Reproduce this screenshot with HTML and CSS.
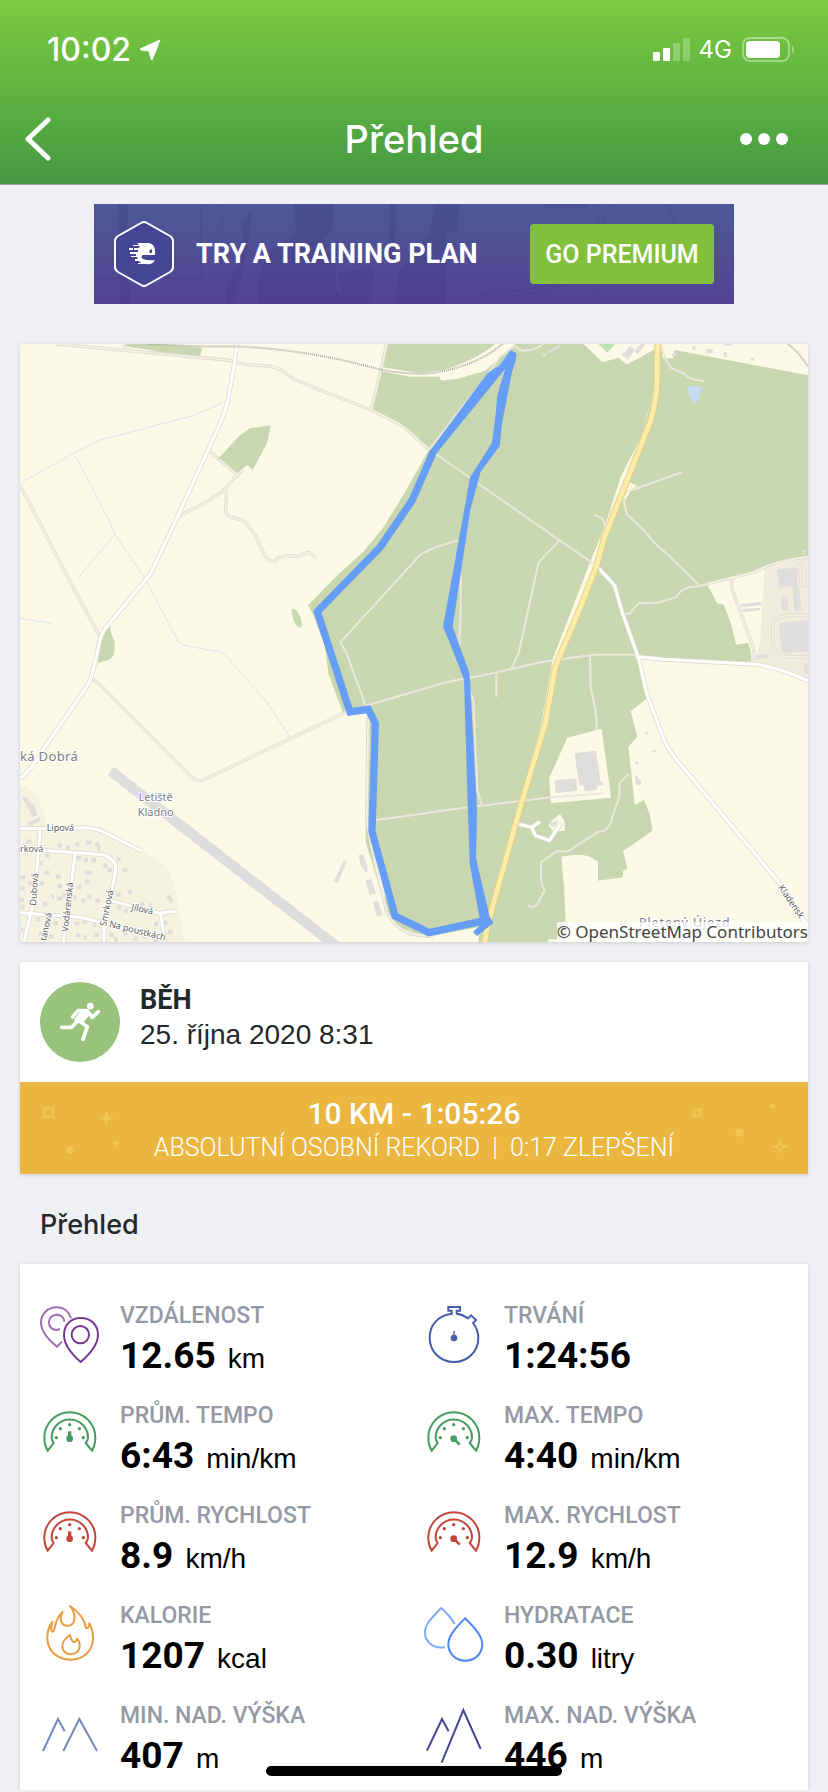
FILE: index.html
```html
<!DOCTYPE html>
<html lang="cs">

<head>
  <meta charset="utf-8">
  <meta name="viewport" content="width=device-width, initial-scale=1">
  <title>Přehled</title>
  <link rel="stylesheet" href="styles.css">
</head>

<body>
  <!-- shared icons -->
  <svg class="defs" width="0" height="0" aria-hidden="true">
    <symbol id="gauge" viewBox="120 432 180 180">
      <path d="M143 572C135 558 133 545 133 533A76 76 0 0 1 286 533C286 545 284 558 276 572L257 549Q264 541 264 533A54 54 0 0 0 155 533Q155 541 161 549Z" fill="none" stroke="currentColor" stroke-width="6" />
      <g fill="currentColor">
        <circle cx="169" cy="533" r="5" />
        <circle cx="181" cy="506" r="5" />
        <circle cx="209" cy="494" r="5" />
        <circle cx="238" cy="506" r="5" />
        <circle cx="250" cy="533" r="5" />
        <circle cx="209" cy="536" r="10" />
      </g>
    </symbol>
  </svg>

  <header class="header">
    <div class="status">
      <span class="time">10:02</span>
      <svg class="location" width="22" height="22" viewBox="0 0 22 22"><path d="M21 1L1 10L2 11L10 12L12 20L13 21Z" fill="#fff" stroke="#fff" stroke-linejoin="round" /></svg>
      <svg class="signal" width="38" height="24" viewBox="0 0 38 24" fill="#fff">
        <rect x="0" y="14" width="7" height="9" rx="1" />
        <rect x="10" y="10" width="7" height="13" rx="1" />
        <rect x="20" y="5" width="7" height="18" rx="1" opacity=".25" />
        <rect x="30" y="0" width="7" height="23" rx="1" opacity=".25" />
      </svg>
      <span class="network">4G</span>
      <svg width="54" height="26" viewBox="0 0 54 26">
        <rect x="1" y="1" width="46" height="23" rx="7" fill="none" stroke="#fff" stroke-width="2" opacity=".4" />
        <rect x="4" y="4" width="34" height="17" rx="4" fill="#fff" />
        <path d="M50 8Q54 12 50 17Z" fill="#fff" opacity=".4" />
      </svg>
    </div>
    <nav class="nav">
      <button class="nav-button" aria-label="Zpět">
        <svg width="28" height="44" viewBox="0 0 28 44"><path d="M24 3L4 22L24 41" fill="none" stroke="#fff" stroke-width="5" stroke-linecap="round" stroke-linejoin="round" /></svg>
      </button>
      <h1 class="title">Přehled</h1>
      <button class="nav-button" aria-label="Více">
        <svg width="48" height="12" viewBox="0 0 48 12" fill="#fff"><circle cx="6" cy="6" r="6" /><circle cx="24" cy="6" r="6" /><circle cx="42" cy="6" r="6" /></svg>
      </button>
    </nav>
  </header>

  <main class="content">
    <!-- premium banner -->
    <section class="banner">
      <svg class="banner-photo" viewBox="0 0 640 100" preserveAspectRatio="none" aria-hidden="true">
        <g fill="#393078" opacity=".2">
          <path d="M200 0H240L238 26L230 35L233 45L242 60V86L255 100H164C160 74 171 60 174 46L194 39L202 24Z" />
          <path d="M340 0H366L363 25L353 30L352 100H301L305 66L325 46L336 28Z" />
          <path d="M148 20L158 4L154 44L140 100H132C130 74 148 60 150 46Z" />
          <path d="M244 68L280 64L277 100H249ZM24 0H34L36 100H26ZM296 0H302L300 60H294ZM450 0H494L492 4H452Z" />
        </g>
        <path d="M107 0V78M128 0V64M0 74H110M380 92L560 68M518 0L480 80L410 94M504 0V100M575 0L590 60L640 52" fill="none" stroke="#33306f" opacity=".2" />
      </svg>
      <svg class="banner-logo" width="60" height="68" viewBox="0 0 60 68" aria-hidden="true">
        <path d="M27 3Q30 1 33 3L56 16Q59 18 59 21V47Q59 50 56 52L33 65Q30 67 27 65L4 52Q1 50 1 47V21Q1 18 4 16Z" fill="#444595" stroke="#fff" stroke-width="2" />
        <path d="M23 23H35Q42 24 41 35H29Q26 37 29 39Q34 41 41 40Q39 45 32 44H24V43H27L25 41H21V39H24L23 37H17V36H22V34H16V32H24V30H20V28H25L26 26H19V25H25Z" fill="#fff" />
        <path d="M15 28H19V30H15Z" fill="#fff" />
        <path d="M38 29Q34 30 36 33H38Z" fill="#444595" />
      </svg>
      <strong class="banner-text">TRY A TRAINING PLAN</strong>
      <button class="premium">GO PREMIUM</button>
    </section>

    <!-- map with the route -->
    <section class="map">
      <svg class="map-canvas" viewBox="60 42 2364 1794" role="img" aria-label="Mapa trasy">
        <defs>
          <g id="tracks">
            <path d="M170 42L375 61L680 90L740 103L810 109Q835 113 850 125L880 146L940 172L1114 240L1175 270Q1225 296 1260 335L1286 357" />
            <path d="M374 42V60M1160 42L1144 115L1114 240" />
            <path d="M60 465L200 735L298 918" />
            <path d="M624 361L712 435L728 420M712 435L670 482L625 512L538 558M670 482Q680 484 679 495L677 545Q680 558 695 562L725 570Q733 572 738 580L765 615L795 677Q810 696 822 695L834 684L860 677L892 680L922 667Q936 670 946 685" />
            <path d="M272 1048Q285 1050 300 1064L575 1342Q590 1356 610 1350L1000 1165L1050 1140" />
            <path d="M1105 1138L1100 1470L1125 1600L1160 1745Q1180 1790 1230 1812L1300 1820M1128 1590L1155 1700" />
            <path d="M2424 681Q2330 690 2264 726L2120 762M2205 742Q2192 750 2194 770L2255 940L2262 965V1002M2424 855H2375Q2318 858 2318 890V940Q2322 978 2370 980H2424M2395 765Q2394 700 2405 698Q2414 700 2412 765Z" />
          </g>
          <g id="forest-tracks">
            <path d="M1286 357L1680 632L1780 700" />
            <path d="M1678 632L1616 697L1556 970L1532 1019" />
            <path d="M1374 631Q1290 655 1260 675L1021 937L1040 970L1096 1125" />
            <path d="M1096 1128L1320 1062Q1360 1050 1440 1038L1630 995L1780 974H1914" />
            <path d="M1382 730V860L1374 1000L1420 1110L1432 1380L1446 1428M1489 1028V1102" />
            <path d="M1770 975L1772 1070Q1790 1150 1791 1200" />
            <path d="M1128 1470L1224 1457L1340 1440L1640 1403L1812 1390" />
            <path d="M2047 426L1880 486L1868 500L1880 552L1930 600L1960 635L2010 680L2100 768L2065 772L2042 784L2028 802L1975 818L1915 820L1890 850L1870 853M2100 768L2125 761" />
            <path d="M1782 555L1808 566L1816 592" />
            <path d="M1540 45Q1558 58 1566 62Q1600 64 1630 42M1540 50L1500 80L1450 150L1286 360" />
            <path d="M1984 42Q1992 90 2014 114L2050 130Q2070 150 2112 153" />
            <path d="M1886 1331L1858 1360V1400L1840 1450L1832 1480L1815 1502L1795 1505L1704 1564H1670L1625 1595Q1618 1660 1634 1682L1610 1724Q1595 1737 1583 1726" />
          </g>
          <g id="roads">
            <path d="M711 42L704 95L684 210Q677 235 668 262L624 361L535 555L455 725Q450 735 438 748L330 878Q305 905 300 930L288 985L272 1048Q265 1066 250 1085L130 1258Q90 1325 60 1345" />
            <path d="M1792 710L1843 765L1866 845L1916 985L1940 1090L1992 1230Q2010 1270 2060 1325L2335 1655L2424 1790" />
            <path d="M1908 980L1990 988L2264 1003Q2330 1010 2424 1053" />
            <path d="M60 1496L260 1493Q290 1495 320 1510L425 1563M60 1560L145 1562L310 1574Q355 1590 345 1630L333 1700L312 1785V1836M120 1500L104 1700L92 1750L72 1836M225 1572L210 1700L190 1836M60 1748L240 1762L310 1778L420 1810M333 1712L480 1750L530 1743M482 1752L494 1836" />
            <path d="M1555 1482L1595 1492L1606 1516L1648 1532L1666 1505L1682 1480M1595 1492L1620 1475" />
          </g>
        </defs>

        <rect x="60" y="42" width="2364" height="1794" fill="#fcfae6" />

        <!-- forests -->
        <g fill="#c8d7af">
          <path d="M1160 42H1751L1807 97L1856 83L1880 104L1970 55L1981 42L1989 85H2019L2024 60L2424 136V678L2330 695L2264 725L2119 760L2152 820L2172 825L2194 885L2209 945L2244 938L2254 970V1002L1914 980L1942 1105L1892 1144L1912 1220L1885 1250L1904 1425L1932 1410L1950 1455L1957 1502L1869 1564L1883 1615L1869 1623V1642L1794 1652V1595L1769 1580Q1740 1568 1684 1580L1692 1670L1699 1826L1647 1828L1642 1836H1435L1440 1790L1284 1820L1190 1790L1160 1740L1097 1535V1430L1100 1145L1028 1146L985 1030L975 950L940 855L924 826L1010 738L1090 665L1148 595L1210 495L1286 360L1230 302L1175 268L1114 238Z" />
          <path d="M378 42H480L606 53L601 78L482 68Q450 58 380 50Z" />
          <path d="M657 383L715 320L750 295L813 286L801 340L758 419L741 405L712 430Z" />
          <path d="M332 885V905L344 935L343 965Q340 990 315 992L292 1000L308 915Z" />
          <path d="M874 840Q882 830 892 846Q905 865 906 884Q903 895 896 892Q878 880 874 840Z" />
        </g>

        <!-- clearings -->
        <g fill="#fcfae6">
          <path d="M1148 112L1260 130L1330 120Q1420 95 1486 42H1545L1456 122L1374 146L1324 152L1318 140L1230 140L1145 124Z" />
          <path d="M1969 160L1938 265L1924 320L1862 440L1814 590L1769 700L1657 990L1649 1040L1624 1180L1569 1390L1552 1480L1660 1040L1780 730L1890 440Z" />
          <path d="M1702 1223L1805 1196L1833 1403L1653 1420L1647 1345Z" />
          <path d="M1655 1472L1680 1452L1694 1475V1502L1660 1505L1646 1486Z" />
          <path d="M1888 456L1912 468L1895 478L1876 510L1862 490Z" />
        </g>
        <path d="M2294 718L2424 680V1050Q2380 1030 2264 1000L2280 940Z" fill="#eeeddb" />
        <path d="M60 1370L75 1368Q115 1390 120 1420L145 1490H260L320 1510L440 1572L496 1604Q525 1650 535 1730L555 1836H60Z" fill="#f5f3e0" />
        <path d="M1795 42H1846L1822 68Z" fill="#bee2b5" />
        <path d="M2064 172Q2084 162 2104 172Q2104 210 2084 219Q2066 208 2064 172Z" fill="#c6dbef" />
        <path d="M341 1310L1018 1836H967L324 1336Z" fill="#dedddd" />

        <!-- streams -->
        <g fill="none" stroke="#d9e6ef" stroke-width="3">
          <path d="M60 460L215 373L300 330L580 257L650 226L665 216H678M215 373L232 388L328 573L345 613L435 745M345 613L237 740M440 755L535 935L550 946L655 965L672 971L800 1115L870 1222M60 864L155 881" />
        </g>

        <!-- buildings -->
        <g fill="#e0dedd">
          <path d="M1641 67L1676 44L1684 50L1645 70ZM1624 70L1636 68L1640 76L1630 82ZM1866 76L1890 48L1904 60L1884 90ZM1904 62L1922 42H1936L1914 72Z" />
          <path d="M2078 47H2086V60H2076ZM2119 57H2138V70H2118ZM2172 66H2180V80H2170ZM2252 83H2262V92H2252ZM2016 70H2029V77H2016ZM2170 42H2195V47H2170Z" />
          <path d="M2332 718L2392 713L2404 842L2384 845L2377 770L2338 773ZM2343 801L2362 799L2366 842L2346 844ZM2337 880L2424 870V965L2346 968ZM2222 822L2284 816V825L2222 832ZM2225 838L2280 833V841L2230 846ZM2268 976L2306 972V984L2266 986ZM2412 1000H2424V1030H2412ZM2405 662L2415 660V675L2408 676Z" />
          <path d="M1723 1270L1789 1262L1801 1356L1809 1357V1365L1792 1368L1790 1380L1754 1384L1752 1366L1738 1367ZM1664 1351L1729 1344L1732 1382L1666 1390ZM1648 1480L1674 1470L1670 1484L1656 1492Z" />
          <path d="M1905 1337H1913V1346Q1930 1353 1922 1363Q1910 1370 1906 1355ZM1905 1295H1916V1302H1905ZM1935 1206H1944V1213H1935ZM1958 1260H1968V1267H1958Z" />
          <path d="M66 1403L80 1400L92 1422L100 1420L114 1455L98 1462L82 1430ZM82 1478L120 1462L122 1472L90 1488Z" />
          <path d="M1032 1590L1041 1595L1012 1660L1001 1655ZM1076 1576L1088 1572L1096 1590L1104 1622L1096 1626L1082 1605ZM1097 1650L1114 1648L1128 1690L1108 1694ZM1118 1716L1134 1712L1148 1755L1132 1760Z" />
        </g>
        <path d="M68 1545h14M80 1535h14M172 1547h14M198 1552h12M226 1543h12M258 1538h16M286 1543h12M292 1555h10M230 1584h14M252 1590h12M274 1590h14M134 1577h14M350 1588h12M368 1620h14M118 1600h10M134 1628h14M168 1640h14M255 1628h20M310 1606h12M322 1620h14M62 1642h14M84 1660h14M62 1675h12M120 1660h12M172 1668h14M186 1695h14M232 1672h12M255 1655h14M60 1710h12M128 1722h14M154 1700h8M172 1706h14M220 1702h10M245 1712h12M262 1700h12M286 1712h14M348 1694h14M384 1686h12M350 1732h14M372 1742h12M420 1722h12M446 1726h10M500 1702h14M508 1712h10M62 1730h12M108 1768h12M138 1772h14M160 1780h14M224 1780h14M248 1776h14M278 1785h12M228 1815h14M250 1822h10M282 1815h14M328 1815h14M342 1828h12M116 1810h14M146 1820h14M62 1800h8M370 1810h12M400 1826h12M428 1820h12M462 1782h12M490 1778h12M504 1806h14M460 1830h14" stroke="#dfdddb" stroke-width="13" />

        <!-- roads -->
        <use href="#tracks" class="track-case" />
        <use href="#tracks" class="track" />
        <use href="#forest-tracks" class="forest-track" />
        <use href="#roads" class="road-case" />
        <use href="#roads" class="road" />
        <path class="rail" d="M440 42L600 49L730 50Q900 60 1060 98L1148 120Q1260 140 1324 124Q1430 105 1508 42M2364 42Q2400 70 2424 110" />
        <path class="highway-case" d="M1973 42L1971 165Q1968 215 1951 275L1874 470L1814 620L1789 710L1734 850L1674 990L1664 1020L1636 1180L1564 1420L1464 1780L1454 1836" />
        <path class="highway" d="M1973 42L1971 165Q1968 215 1951 275L1874 470L1814 620L1789 710L1734 850L1674 990L1664 1020L1636 1180L1564 1420L1464 1780L1454 1836" />

        <!-- labels -->
        <g class="map-label">
          <text x="60" y="1292" font-size="39" letter-spacing="1">ká Dobrá</text>
          <text x="467" y="1412" font-size="33" text-anchor="middle">Letiště</text>
          <text x="467" y="1457" font-size="33" text-anchor="middle">Kladno</text>
          <text x="1917" y="1790" font-size="37" letter-spacing="3">Pletený Újezd</text>
        </g>
        <g class="street-label">
          <text x="140" y="1503">Lipová</text>
          <text x="60" y="1565">rková</text>
          <text transform="translate(108 1727) rotate(-86)">Dubová</text>
          <text transform="translate(204 1806) rotate(-84)">Vodárenská</text>
          <text transform="translate(318 1790) rotate(-78)">Smrková</text>
          <text transform="translate(138 1834) rotate(-78)">tanová</text>
          <text transform="translate(393 1740) rotate(12)">Jílová</text>
          <text transform="translate(326 1790) rotate(14)">Na poustkách</text>
          <text transform="translate(2334 1672) rotate(56)">Kladensk</text>
        </g>

        <!-- recorded route -->
        <path d="M1300 365L1236 512L1140 652L952 845L1050 1146L1105 1138L1126 1180L1116 1505L1185 1758L1287 1808L1454 1772" fill="none" stroke="#669df6" stroke-width="22" />
        <path d="M1532 60L1549 70L1548 90L1536 125L1506 280L1499 348L1442 425L1411 540L1358 890L1407 1025L1410 1050L1431 1440L1428 1585L1469 1760L1481 1778L1431 1818L1419 1806L1441 1785L1439 1765L1409 1600L1404 1450L1392 1050L1346 930L1329 890L1389 560L1410 442L1476 338L1486 260L1491 205L1499 170L1516 116L1310 370L1286 368L1462 130L1499 106Z" fill="#669df6" />
      </svg>
      <a class="copyright" href="#">© OpenStreetMap Contributors</a>
    </section>

    <!-- workout -->
    <section class="card">
      <div class="workout">
        <svg width="80" height="80" viewBox="120 96 240 240" aria-hidden="true">
          <circle cx="240" cy="216" r="120" fill="#99c27c" />
          <circle cx="271" cy="168" r="10" fill="#fff" />
          <g fill="none" stroke="#fff" stroke-width="11" stroke-linecap="round" stroke-linejoin="round">
            <path d="M218 201L234 182H262L277 202L295 185" />
            <path d="M185 232H215L240 205M238 214L262 230L249 268" />
          </g>
          <path d="M244 180L266 184L268 196L248 220L230 218L222 210Z" fill="#fff" />
        </svg>
        <div>
          <h2 class="sport">BĚH</h2>
          <p class="date">25. října 2020 8:31</p>
        </div>
      </div>
      <div class="record">
        <svg width="100" height="54" viewBox="120 456 300 162" aria-hidden="true">
          <path d="M123 462L135 469H157L168 462L161 473V497L168 507L157 500H135L123 507L130 497V473ZM137 475V494H155V475Z" fill="#f0c755" fill-rule="evenodd" />
          <path d="M319 480L325 496L341 502L325 508L319 524L313 508L297 502L313 496Z" fill="#f0c755" />
          <circle cx="209" cy="597" r="11" fill="#f0c755" /><circle cx="348" cy="576" r="7" fill="#f0c755" />
        </svg>
        <div class="record-text">
          <p class="record-time">10 KM - 1:05:26</p>
          <p class="record-note">ABSOLUTNÍ OSOBNÍ REKORD &nbsp;|&nbsp; 0:17 ZLEPŠENÍ</p>
        </div>
        <svg width="100" height="54" viewBox="840 456 300 162" aria-hidden="true">
          <path d="M849 467L859 473H876L887 467L880 477V493L887 504L876 497H859L849 504L856 493V477ZM862 479V491H874V479Z" fill="#f0c755" fill-rule="evenodd" />
          <circle cx="994" cy="545" r="12" fill="#f0c755" /><circle cx="1094" cy="466" r="7" fill="#f0c755" />
          <path d="M1117 570L1122 582L1134 587L1122 592L1117 604L1112 592L1100 587L1112 582Z" fill="none" stroke="#f0c755" stroke-width="5" />
        </svg>
      </div>
    </section>

    <h2 class="section-title">Přehled</h2>

    <!-- stats -->
    <section class="card stats">
      <div class="stat">
        <svg class="icon" viewBox="120 132 180 180" fill="none" stroke-width="6">
          <path d="M213 175C207 155 191 142 171 142C143 142 123 162 123 187C123 211 142 237 171 260L186 245M193 185C192 172 182 164 170 164C156 164 147 174 147 187C147 201 157 210 170 210L180 207" stroke="#9a6fb2" />
          <path d="M242 306C211 279 192 250 192 225C192 194 213 174 242 174C273 174 294 195 294 225C294 251 273 279 242 306Z" stroke="#763a93" />
          <circle cx="241" cy="224" r="26" stroke="#763a93" />
        </svg>
        <div>
          <h3 class="label">VZDÁLENOST</h3>
          <p class="value">12.65 <span class="unit">km</span></p>
        </div>
      </div>
      <div class="stat">
        <svg class="icon" viewBox="48 132 180 180" fill="none" stroke="#465da9" stroke-width="6">
          <path d="M131 165V152H121V141H156V152H146V161Q164 163 180 175L189 166L204 180L195 189C205 202 211 216 211 233C211 274 179 306 138 306C97 306 65 274 65 233C65 196 90 166 131 161" />
          <circle cx="138" cy="234" r="10" fill="#465da9" stroke="none" />
          <path d="M138 234V213" stroke-width="4" />
        </svg>
        <div>
          <h3 class="label">TRVÁNÍ</h3>
          <p class="value">1:24:56</p>
        </div>
      </div>
      <div class="stat">
        <svg class="icon green" viewBox="120 432 180 180"><use href="#gauge" x="120" y="432" width="180" height="180" /><path d="M209 536V514" stroke="currentColor" stroke-width="10" /></svg>
        <div>
          <h3 class="label">PRŮM. TEMPO</h3>
          <p class="value">6:43 <span class="unit">min/km</span></p>
        </div>
      </div>
      <div class="stat">
        <svg class="icon green" viewBox="120 432 180 180"><use href="#gauge" x="120" y="432" width="180" height="180" /><path d="M209 536L227 554" stroke="currentColor" stroke-width="8" /></svg>
        <div>
          <h3 class="label">MAX. TEMPO</h3>
          <p class="value">4:40 <span class="unit">min/km</span></p>
        </div>
      </div>
      <div class="stat">
        <svg class="icon red" viewBox="120 432 180 180"><use href="#gauge" x="120" y="432" width="180" height="180" /><path d="M209 536V514" stroke="currentColor" stroke-width="10" /></svg>
        <div>
          <h3 class="label">PRŮM. RYCHLOST</h3>
          <p class="value">8.9 <span class="unit">km/h</span></p>
        </div>
      </div>
      <div class="stat">
        <svg class="icon red" viewBox="120 432 180 180"><use href="#gauge" x="120" y="432" width="180" height="180" /><path d="M209 536L227 554" stroke="currentColor" stroke-width="8" /></svg>
        <div>
          <h3 class="label">MAX. RYCHLOST</h3>
          <p class="value">12.9 <span class="unit">km/h</span></p>
        </div>
      </div>
      <div class="stat">
        <svg class="icon" viewBox="120 162 180 180" fill="none" stroke="#ea9c3e" stroke-width="6" stroke-linejoin="round">
          <path d="M210 168C234 184 254 208 258 234C266 236 268 228 268 220C276 234 279 250 279 266C279 302 250 329 211 329C172 329 142 302 142 264C142 244 147 228 157 216C153 228 152 244 158 245C168 244 160 208 188 186C176 208 184 227 202 227C226 227 232 196 210 168Z" />
          <path d="M210 255C196 264 187 276 187 289C187 303 198 313 212 313C227 313 239 303 239 289C239 279 236 270 231 266C229 275 224 278 219 275C213 271 212 262 210 255Z" />
        </svg>
        <div>
          <h3 class="label">KALORIE</h3>
          <p class="value">1207 <span class="unit">kcal</span></p>
        </div>
      </div>
      <div class="stat">
        <svg class="icon" viewBox="48 162 180 180" fill="none" stroke-width="6">
          <path d="M140 222Q125 196 100 174C67 207 51 225 51 247C51 276 75 297 111 292" stroke="#80abf2" />
          <path d="M171 205C138 238 121 260 121 283C121 311 143 332 172 332C201 332 223 311 223 283C223 260 205 238 171 205Z" stroke="#4f86ec" />
        </svg>
        <div>
          <h3 class="label">HYDRATACE</h3>
          <p class="value">0.30 <span class="unit">litry</span></p>
        </div>
      </div>
      <div class="stat">
        <svg class="icon" viewBox="120 462 180 180" fill="none" stroke="#7689be" stroke-width="6"><path d="M129 603L174 507L194 544M190 603L238 507L291 603" /></svg>
        <div>
          <h3 class="label">MIN. NAD. VÝŠKA</h3>
          <p class="value">407 <span class="unit">m</span></p>
        </div>
      </div>
      <div class="stat">
        <svg class="icon" viewBox="48 462 180 180" fill="none" stroke="#444897" stroke-width="6"><path d="M57 602L102 507L122 544M101 638L166 480L218 597" /></svg>
        <div>
          <h3 class="label">MAX. NAD. VÝŠKA</h3>
          <p class="value">446 <span class="unit">m</span></p>
        </div>
      </div>
    </section>
  </main>

  <div class="home-bar"></div>
</body>

</html>
```

FILE: styles.css
```css
* {
  margin: 0;
  padding: 0;
  box-sizing: border-box;
}

body {
  background: #eff0f3;
  color: #24282b;
  font-family: Roboto, "Liberation Sans", sans-serif;
}

button {
  border: 0;
  background: none;
  font-family: inherit;
  cursor: pointer;
}

svg {
  display: block;
}

.defs {
  position: absolute;
}

/* header */
.header {
  background: linear-gradient(#7bcb40, #449942);
  border-bottom: 1px solid #a3a5a5;
  color: #fff;
}

.status {
  display: flex;
  align-items: center;
  height: 100px;
  padding: 0 32px 0 47px;
}

.time {
  font: 500 32px/40px Inter, sans-serif;
}

.location {
  margin-left: 8px;
}

.signal {
  margin-left: auto;
}

.network {
  margin: 0 10px 0 8px;
  font: 400 24px/40px Inter, sans-serif;
}

.nav {
  display: flex;
  align-items: center;
  justify-content: space-between;
  height: 84px;
  padding: 0 24px 6px;
}

.nav-button {
  display: flex;
  align-items: center;
  width: 64px;
  height: 48px;
}

.title {
  font: 500 38px/48px Inter, sans-serif;
}

.content {
  padding: 19px 20px 0;
}

/* banner */
.banner {
  position: relative;
  display: flex;
  align-items: center;
  max-width: 640px;
  height: 100px;
  margin: 0 auto 40px;
  padding: 0 20px;
  background: linear-gradient(#4b5a96, #554294);
}

.banner-photo {
  position: absolute;
  top: 0;
  left: 0;
  width: 100%;
  height: 100%;
}

.banner-logo,
.banner-text,
.premium {
  position: relative;
}

.banner-text {
  margin-left: 22px;
  color: #fff;
  font-size: 27px;
  line-height: 32px;
}

.premium {
  width: 184px;
  height: 60px;
  margin-left: auto;
  border-radius: 4px;
  background: #82c03c;
  color: #fff;
  font-size: 25px;
  font-weight: 500;
}

/* map */
.map {
  position: relative;
  margin-bottom: 20px;
  box-shadow: 0 1px 4px rgba(0, 0, 0, 0.15);
}

.map-canvas {
  width: 100%;
  height: auto;
}

.track-case,
.track,
.forest-track,
.road-case,
.road,
.rail,
.highway-case,
.highway {
  fill: none;
  stroke-linejoin: round;
}

.track-case {
  stroke: #dedccd;
  stroke-width: 10;
}

.track {
  stroke: #f3f1e4;
  stroke-width: 5;
}

.forest-track {
  stroke: #ece7dc;
  stroke-width: 6;
}

.road-case {
  stroke: #dfddd0;
  stroke-width: 14;
}

.road {
  stroke: #fff;
  stroke-width: 9;
}

.rail {
  stroke: #aaa;
  stroke-width: 6;
  stroke-dasharray: 3 3;
}

.highway-case {
  stroke: #e2d184;
  stroke-width: 20;
}

.highway {
  stroke: #fcecaa;
  stroke-width: 14;
}

.map-label,
.street-label {
  fill: #7c7d84;
  stroke: #fff;
  stroke-width: 6px;
  stroke-linejoin: round;
  paint-order: stroke;
  font-family: "Noto Sans", sans-serif;
}

.street-label {
  fill: #606060;
  font-size: 27px;
}

.copyright {
  position: absolute;
  right: 0;
  bottom: 0;
  background: rgba(255, 255, 255, 0.75);
  color: #444;
  font: 17px/20px "Noto Sans", sans-serif;
  text-decoration: none;
}

/* cards */
.card {
  background: #fff;
  box-shadow: 0 1px 4px rgba(0, 0, 0, 0.15);
}

.workout {
  display: flex;
  gap: 20px;
  padding: 20px;
}

.sport {
  font-size: 27px;
  line-height: 36px;
}

.date {
  font: 28px/34px "Liberation Sans", sans-serif;
}

.record {
  display: flex;
  align-items: center;
  justify-content: space-between;
  height: 92px;
  padding: 4px 20px 0;
  background: #eab640;
  color: #fff;
}

.record-text {
  text-align: center;
}

.record-time {
  font-size: 30px;
  font-weight: 500;
  line-height: 36px;
}

.record-note {
  font-size: 25px;
  font-weight: 300;
  line-height: 32px;
}

.section-title {
  padding: 32px 20px 20px;
  font: 500 27px/38px Inter, sans-serif;
}

/* stats */
.stats {
  display: grid;
  grid-template-columns: 1fr 1fr;
  row-gap: 12px;
  padding: 38px 0 0 20px;
  color: #000;
}

.stat {
  display: flex;
  gap: 20px;
  height: 88px;
}

.icon {
  width: 60px;
  height: 60px;
  margin-top: 2px;
}

.green {
  color: #459c5e;
}

.red {
  color: #c5453a;
}

.label {
  color: #9599a4;
  font-size: 23px;
  font-weight: 500;
  line-height: 28px;
}

.value {
  font-size: 37px;
  font-weight: 700;
  line-height: 52px;
}

.unit {
  margin-left: 3px;
  font: 28px "Liberation Sans", sans-serif;
}

/* home indicator stays over the page */
.home-bar {
  position: fixed;
  bottom: 16px;
  left: 50%;
  width: 296px;
  height: 10px;
  margin-left: -148px;
  border-radius: 5px;
  background: #000;
}
```
